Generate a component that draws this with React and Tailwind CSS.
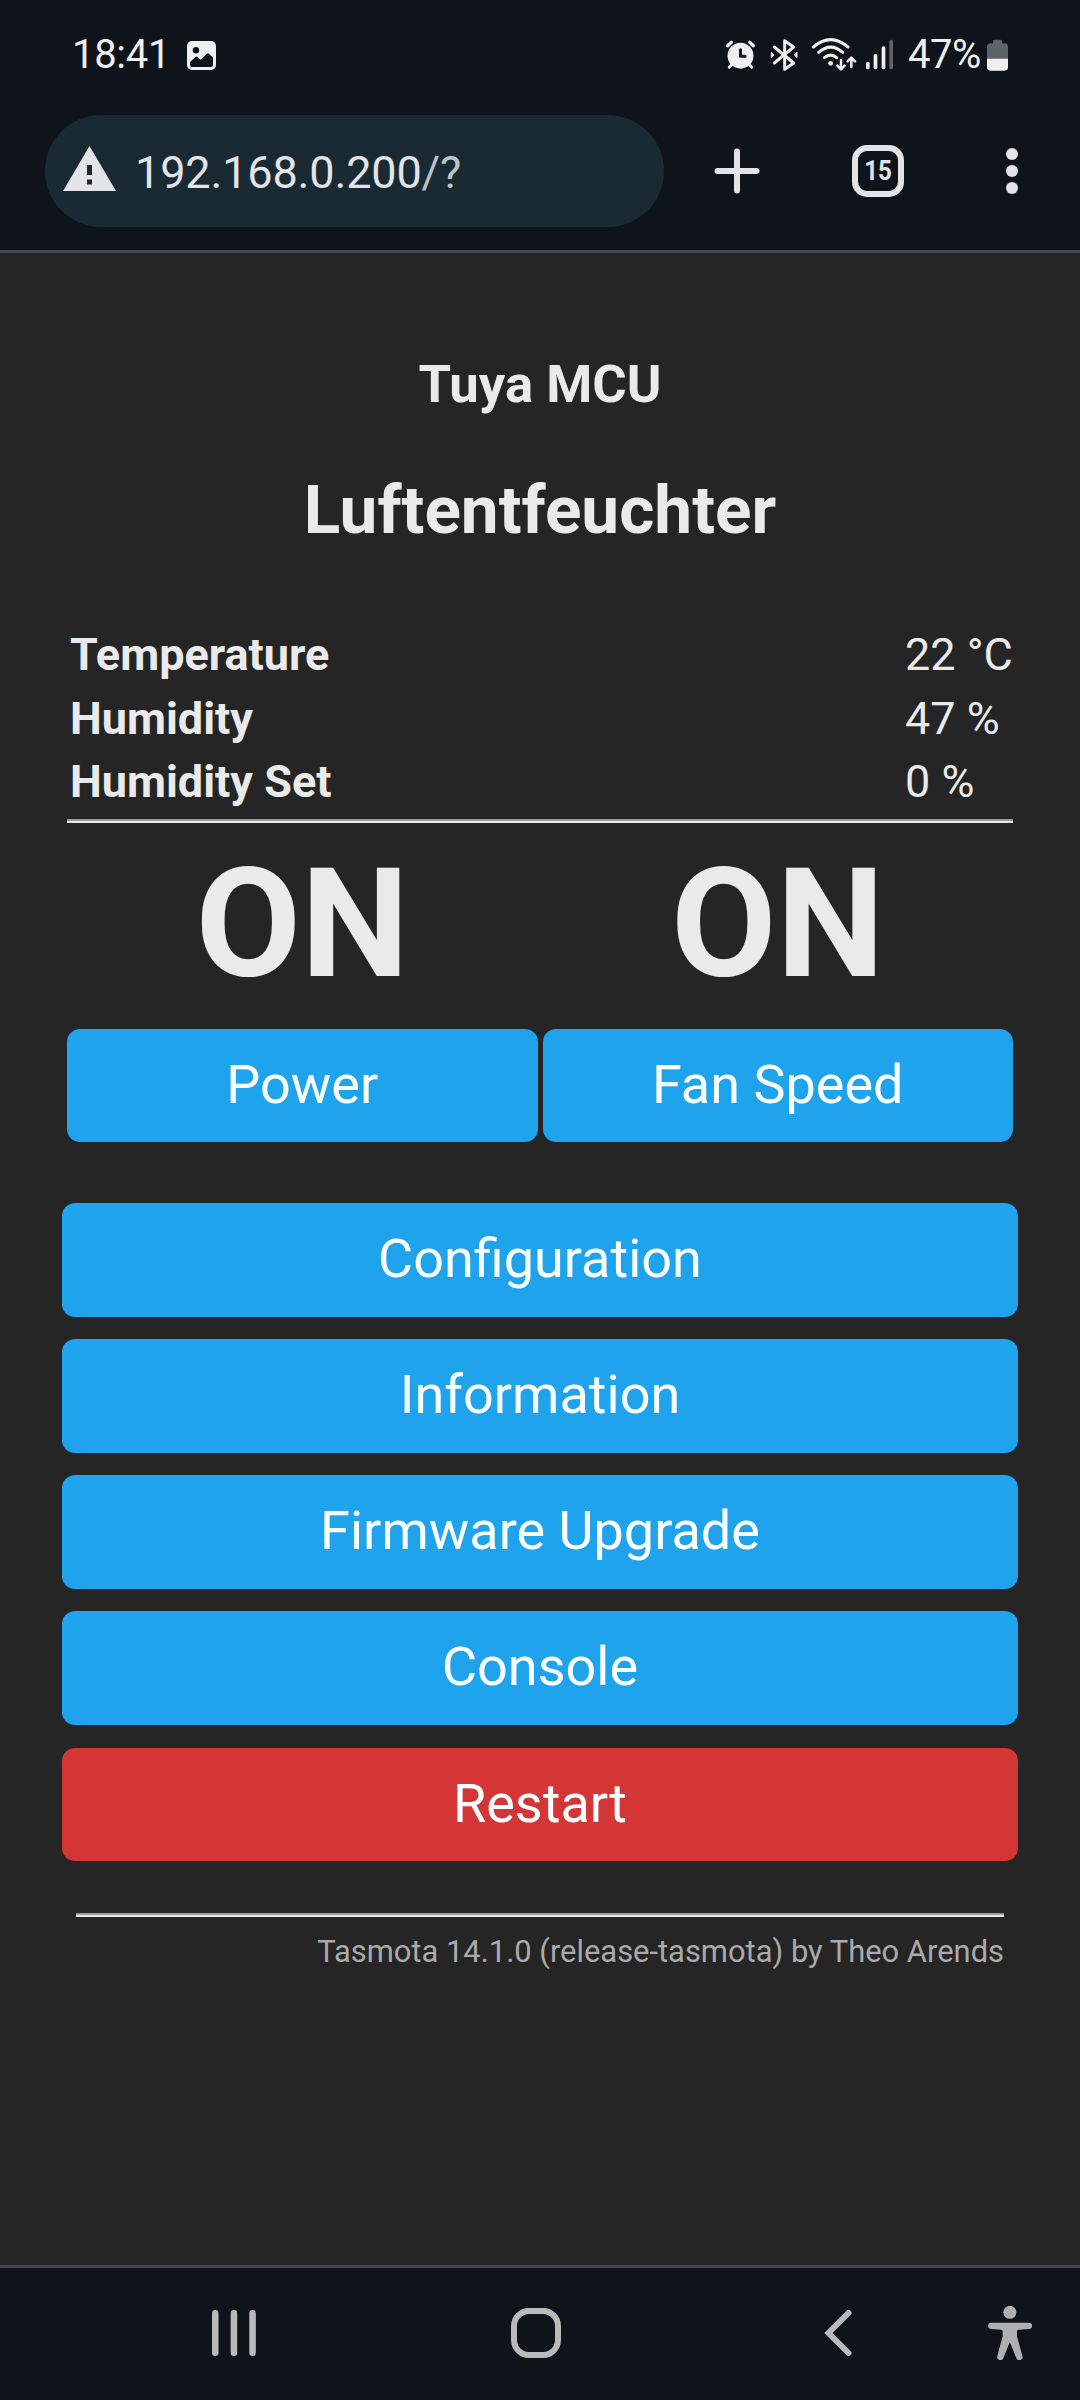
const AlarmIcon = () => (
  <svg className="w-[31px] h-[35px]" viewBox="75 36 93 105" fill="none" stroke="#efefef" strokeLinecap="round">
    <circle cx="121.500" cy="92" r="39" fill="#efefef" stroke="none" />
    <path d="M83 62l11-10M160 62l-11-10" strokeWidth="10" />
    <path d="M97 117l-9 10M146 117l9 10" strokeWidth="9" />
    <path d="M121.500 74v20h14" stroke="#0f141b" strokeWidth="9" strokeLinejoin="round" />
  </svg>
);

const BluetoothIcon = () => (
  <svg className="w-[28px] h-[35px]" viewBox="210 36 84 105" fill="none" stroke="#efefef" strokeWidth="9">
    <path d="M223 66l58 48-27 19V47l27 19-58 48" strokeLinecap="round" strokeLinejoin="round" />
    <path d="M214 82l8 8-8 8zM291 82l-8 8 8 8z" fill="#efefef" strokeWidth="3" strokeLinejoin="round" />
  </svg>
);

const WifiIcon = () => (
  <svg className="w-[46px] h-[35px]" viewBox="333 36 138 105" fill="none" stroke="#efefef" strokeLinecap="round" strokeLinejoin="round">
    <path d="M340 66Q392 22 444 66" strokeWidth="9" />
    <path d="M356 82Q392 51 428 82" strokeWidth="9" />
    <path d="M373 98Q392 83 410 98" strokeWidth="9" />
    <circle cx="392" cy="115" r="7" fill="#efefef" stroke="none" />
    <path d="M423 105v27M412 122l11 11 11-11" strokeWidth="7.500" />
    <path d="M454 126v-27M443 109l11-11 11 11" strokeWidth="7.500" />
  </svg>
);

const SignalIcon = () => (
  <svg className="w-[29px] h-[35px]" viewBox="495 36 87 105" fill="#efefef">
    <rect x="498" y="110" width="11" height="23" rx="5" />
    <rect x="521" y="87" width="11" height="46" rx="5" />
    <rect x="545" y="64" width="11" height="69" rx="5" />
    <rect x="568" y="44" width="11" height="89" rx="5" fill="#5f6266" />
  </svg>
);

const BatteryIcon = () => (
  <svg className="w-[21px] h-[35px]" viewBox="861 36 63 105">
    <path d="M879 49q0-5 5-5h17q5 0 5 5v6h7q11 0 11 11v36h-63V66q0-11 11-11h7z" fill="#5f6266" />
    <path d="M861 101h63v26q0 10-10 10h-43q-10 0-10-10z" fill="#efefef" />
  </svg>
);

const PictureIcon = () => (
  <svg className="w-[29px] h-[29px] mt-[2px]" viewBox="0 0 29 29">
    <rect width="29" height="29" rx="5" fill="#efefef" />
    <circle cx="9" cy="9.300" r="3.200" fill="#0f141b" />
    <path d="M3 21l5.500-5q1-.8 2 0l3 2.800 6.500-6q1-.9 2 0l4 4V24q0 2-2 2H5q-2 0-2-2z" fill="#0f141b" />
  </svg>
);

const StatusBar = () => (
  <div className="flex items-center h-[109px] pl-[72px] text-[40px] leading-none text-[#efefef]">
    <span className="w-[115px] tracking-[-0.3px]">18:41</span>
    <PictureIcon />
    <div className="flex items-center ml-[509px]">
      <AlarmIcon />
      <div className="ml-[14px]"><BluetoothIcon /></div>
      <div className="ml-[13px]"><WifiIcon /></div>
      <div className="ml-2"><SignalIcon /></div>
      <span className="w-[79px] ml-[14px] tracking-[-0.5px]">47%</span>
      <BatteryIcon />
    </div>
  </div>
);

const AddressBar = () => (
  <div className="flex items-center pt-[6px] pl-[45px]">
    <div className="flex items-center w-[619px] h-[112px] pl-[18px] rounded-full bg-[#1a2a33]">
      <svg className="w-[53px] h-[45px] mb-[6px]" viewBox="0 0 53 45">
        <path d="M26.500 0L53 45H0z" fill="#e2e4e7" />
        <path d="M24 19h5v10h-5zM24 33.500h5v5h-5z" fill="#1a2a33" />
      </svg>
      <span className="mt-[2px] ml-[19px] text-[45px] leading-none tracking-[-0.15px] text-[#e2e4e7]">
        192.168.0.200<span className="text-[#bcc3c8]">/?</span>
      </span>
    </div>
    <svg className="w-[46px] h-[46px] ml-[50px]" viewBox="0 0 46 46" stroke="#e3e4e8" strokeWidth="6" strokeLinecap="round">
      <path d="M23 3.500v39M3.500 23h39" />
    </svg>
    <div className="flex items-center justify-center w-[52px] h-[52px] ml-[92px] rounded-[15px] border-[6px] border-[#e3e4e8]">
      <span className="text-[28px] leading-none font-bold text-[#e3e4e8] scale-x-[0.86]">15</span>
    </div>
    <svg className="w-3 h-[46px] ml-[102px]" viewBox="0 0 12 46" fill="#e3e4e8">
      <circle cx="6" cy="6" r="6" />
      <circle cx="6" cy="23" r="6" />
      <circle cx="6" cy="40" r="6" />
    </svg>
  </div>
);

const sensors = [
  { label: 'Temperature', value: '22 °C' },
  { label: 'Humidity', value: '47 %' },
  { label: 'Humidity Set', value: '0 %' },
];

const toggles = [
  { label: 'Power', state: 'ON' },
  { label: 'Fan Speed', state: 'ON' },
];

const menu = ['Configuration', 'Information', 'Firmware Upgrade', 'Console'];

const Divider = () => (
  <div className="h-1 border-t-2 border-[#9a9a9a] bg-[#eaeaea]" />
);

const NavBar = () => (
  <nav className="flex items-center h-[135px] pb-[3px] pl-[212px] border-t-[3px] border-[#42464e] bg-[#0f141b]">
    <svg className="w-[44px] h-[46px]" viewBox="0 0 44 46" fill="#b9babc">
      <rect x="0" width="6.500" height="46" rx="3.200" />
      <rect x="18.700" width="6.500" height="46" rx="3.200" />
      <rect x="37.300" width="6.500" height="46" rx="3.200" />
    </svg>
    <div className="w-[50px] h-[50px] ml-[255px] rounded-[18px] border-[6px] border-[#b9babc]" />
    <svg className="w-[28px] h-[46px] ml-[263px]" viewBox="0 0 28 46" fill="none" stroke="#b9babc" strokeWidth="6" strokeLinecap="round">
      <path d="M24.500 3L4.500 23l20 20" />
    </svg>
    <svg className="w-[44px] h-[54px] ml-[136px]" viewBox="0 0 132 162" fill="#afb0b3">
      <circle cx="65.500" cy="19" r="19.500" />
      <path d="M10 50h113a9.500 9.500 0 0 1 0 19l-31 2q-5 0-5 6v14l16 59a9 9 0 0 1-18 6L65.500 108 46 156a9 9 0 0 1-18-6l16-59V77q0-6-5-6l-29-2a9.500 9.500 0 0 1 0-19z" />
    </svg>
  </nav>
);

const App = () => {
  return (
    <div className="flex flex-col w-[1080px] h-[2400px] bg-[#252525] font-[Roboto,sans-serif] text-[#eaeaea]">
      <header className="h-[253px] border-b-[3px] border-[#42474b] bg-[#0f141b]">
        <StatusBar />
        <AddressBar />
      </header>

      <main className="flex-1 px-[62px] pt-[100px]">
        <h3 className="text-center text-[52.65px] leading-[62px] font-bold">Tuya MCU</h3>
        <h2 className="mt-[55px] text-center text-[67.5px] leading-[80px] font-bold">Luftentfeuchter</h2>

        <div className="mt-[73px] px-[5px]">
          {sensors.map((s) => (
            <div key={s.label} className="flex justify-between pl-[3px] text-[45px] leading-[63.5px]">
              <span className="font-bold">{s.label}</span>
              <span className="w-[108px] whitespace-nowrap">{s.value}</span>
            </div>
          ))}
          <div className="mt-[5.5px]">
            <Divider />
          </div>

          <div className="grid grid-cols-2 gap-x-[5px] mt-[11px]">
            {toggles.map((item) => (
              <div key={item.label} className="text-center">
                <div className="text-[153px] leading-[180px] font-bold">{item.state}</div>
                <button className="block w-full h-[113px] mt-[15px] pb-[2px] rounded-[13px] bg-[#1fa3ec] text-[54px] leading-[111px] text-[#faffff]">
                  {item.label}
                </button>
              </div>
            ))}
          </div>
        </div>

        <div className="flex flex-col gap-[22px] mt-[61px]">
          {menu.map((label) => (
            <button key={label} className="h-[114px] pb-[2px] rounded-[13px] bg-[#1fa3ec] text-[54px] leading-[112px] text-[#faffff]">
              {label}
            </button>
          ))}
          <button className="h-[113px] mt-[1px] pb-[2px] rounded-[13px] bg-[#d43535] text-[54px] leading-[111px] text-[#faffff]">
            Restart
          </button>
        </div>

        <div className="mt-[52px] px-[14px]">
          <Divider />
          <p className="mt-[17px] text-right text-[30.9px] leading-[36px] text-[#aaa]">
            Tasmota 14.1.0 (release-tasmota) by Theo Arends
          </p>
        </div>
      </main>

      <NavBar />
    </div>
  );
};

export default App;
